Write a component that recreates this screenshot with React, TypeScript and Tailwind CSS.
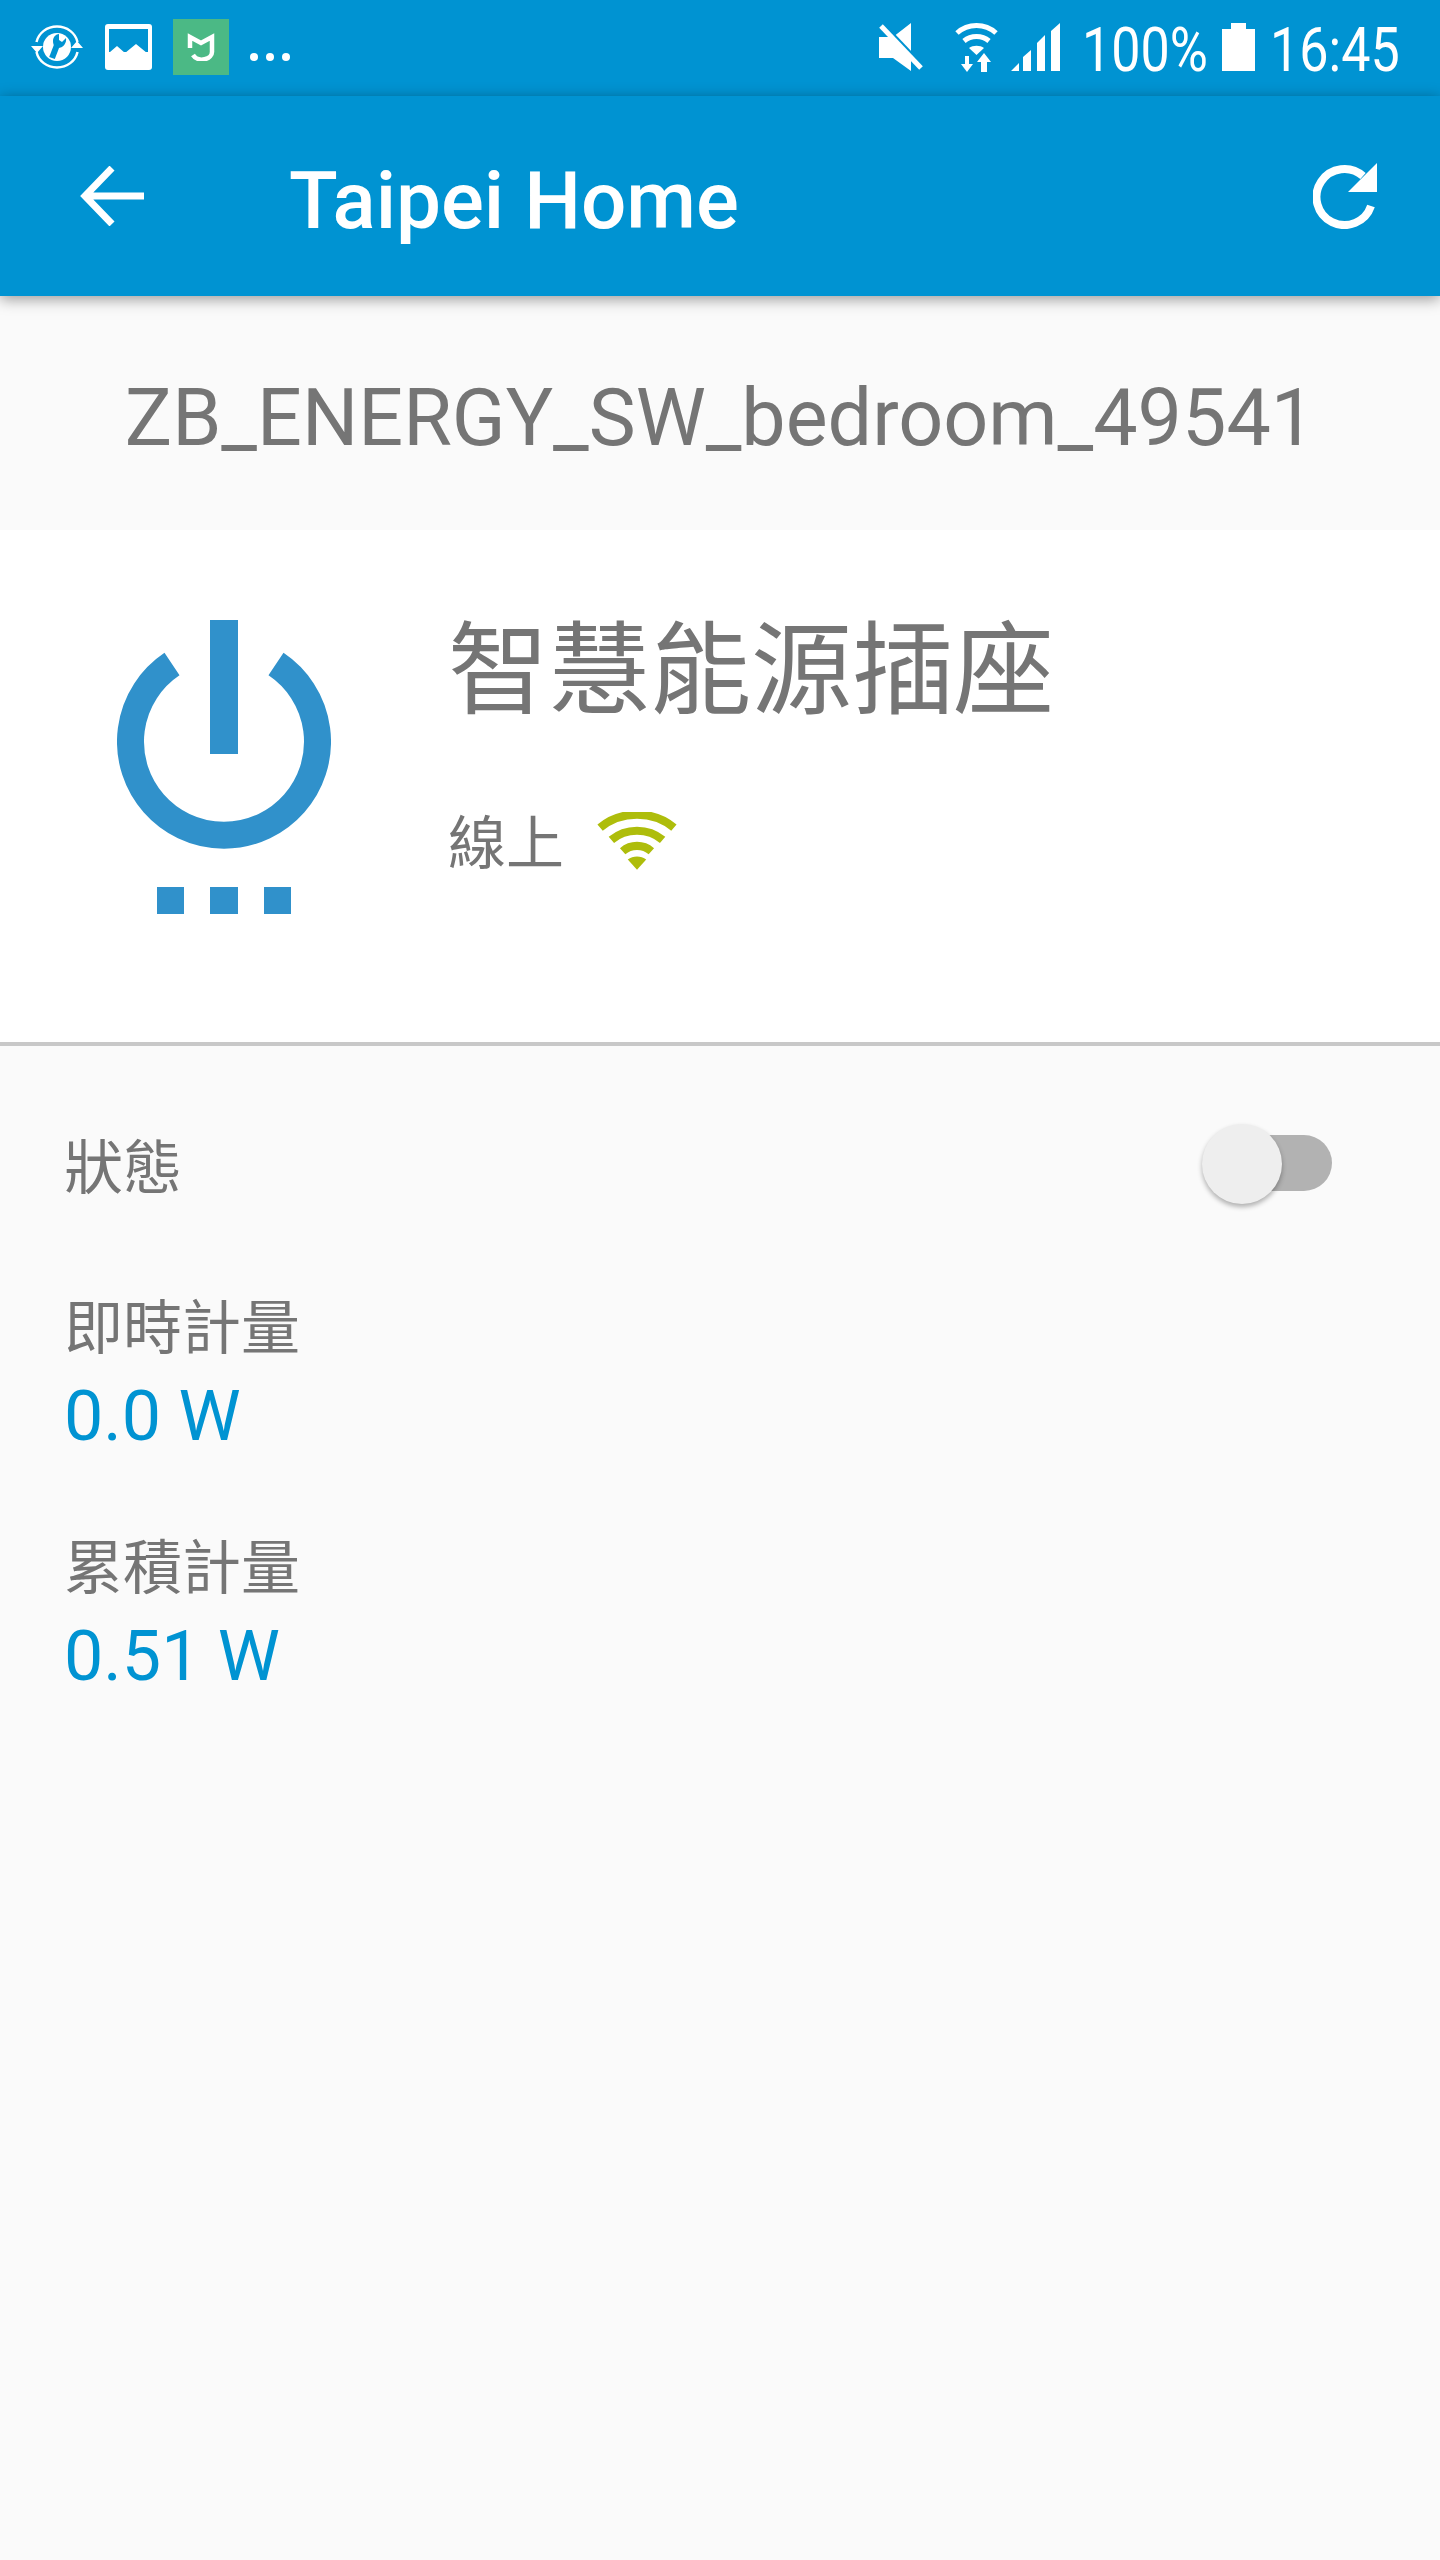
const FONT = "font-['Roboto','Noto_Sans_CJK_TC',sans-serif]";

/* Status bar icons, drawn by hand to follow the phone's own glyphs */
function SyncWrenchIcon() {
  return (
    <svg width="52" height="44" viewBox="0 0 52 44" fill="none" className="shrink-0">
      <path d="M5.500 17C7.500 8 16 1.500 26 1.500S44.500 8 46.500 17M46.500 27C44.500 36 36 42.500 26 42.500S7.500 36 5.500 27" stroke="#fff" strokeWidth="2.500" />
      <path d="M0 21h12L6 28zM40 23h12l-6-7z" fill="#fff" />
      <circle cx="26" cy="22" r="14" fill="#fff" />
      <path d="M21 33l5-13" stroke="#0093d2" strokeWidth="6" />
      <path d="M22 16c0-4 3-7 6-7v6l3 2 4-4c1 5-3 10-8 10-3 0-5-3-5-7z" fill="#0093d2" />
    </svg>
  );
}

function GalleryIcon() {
  return (
    <svg width="47" height="46" viewBox="0 0 47 46" className="shrink-0">
      <rect width="47" height="46" rx="3" fill="#fff" />
      <rect x="4" y="5" width="39" height="23" fill="#0093d2" />
      <path d="M5 28l7-6 8 7 11-9 11 9v6H5z" fill="#fff" />
    </svg>
  );
}

function MiHomeIcon() {
  return (
    <div className="flex h-[56px] w-[56px] shrink-0 items-center justify-center bg-[#4bb985]">
      <svg width="28" height="28" viewBox="0 0 28 28" fill="none">
        <path d="M3 15V4l11 6 11-6v14a10 8 0 0 1-19 4" stroke="#fff" strokeWidth="4.500" />
      </svg>
    </div>
  );
}

function MuteIcon() {
  return (
    <svg width="44" height="48" viewBox="0 0 44 48" className="shrink-0">
      <path d="M32 0v48L14 35H0V14h14z" fill="#fff" />
      <path d="M2 0l42 44" stroke="#0093d2" strokeWidth="5" />
      <path d="M2 3l40 42" stroke="#fff" strokeWidth="5" />
    </svg>
  );
}

function DataWifiIcon() {
  return (
    <svg width="43" height="49" viewBox="0 0 43 49" fill="none" className="shrink-0">
      <path d="M2 10c11-10 28-10 39 0" stroke="#fff" strokeWidth="5" />
      <path d="M9 18c7-6 18-6 25 0" stroke="#fff" strokeWidth="5" />
      <path d="M14 25l7.500 7 7.500-7c-4-3-11-3-15 0z" fill="#fff" />
      <path d="M10 33h4v8h4l-6 8-6-8h4zM29 30l7 9h-4v10h-6V39h-4z" fill="#fff" />
    </svg>
  );
}

function SignalIcon() {
  return (
    <svg width="49" height="48" viewBox="0 0 49 48" className="shrink-0">
      <path d="M0 48l8-8v8zM12 48V34l8-7v21zM26 48V20l8-8v36zM40 48V8l9-8v48z" fill="#fff" />
    </svg>
  );
}

function BatteryIcon() {
  return (
    <svg width="33" height="48" viewBox="0 0 33 48" className="shrink-0">
      <path d="M0 6h9V0h15v6h9v42H0z" fill="#fff" />
    </svg>
  );
}

function StatusBar() {
  return (
    <div className="flex h-[96px] items-center bg-[#0093d2] pb-[2px] pl-[31px] pr-[39px] text-white">
      <SyncWrenchIcon />
      <div className="ml-[22px]">
        <GalleryIcon />
      </div>
      <div className="ml-[21px]">
        <MiHomeIcon />
      </div>
      <div className="ml-[21px] mt-[20px] flex gap-[8px]">
        <span className="h-[8px] w-[8px] rounded-full bg-white" />
        <span className="h-[8px] w-[8px] rounded-full bg-white" />
        <span className="h-[8px] w-[8px] rounded-full bg-white" />
      </div>

      <div className="ml-auto flex items-center">
        <MuteIcon />
        <div className="ml-[32px]">
          <DataWifiIcon />
        </div>
        <div className="ml-[13px]">
          <SignalIcon />
        </div>
        <span className="ml-[22px] mt-[5px] w-[128px] origin-left scale-x-[0.84] text-[62px] leading-none whitespace-nowrap">100%</span>
        <div className="ml-[12px]">
          <BatteryIcon />
        </div>
        <span className="ml-[15px] mt-[5px] w-[131px] origin-left scale-x-[0.84] text-[62px] leading-none whitespace-nowrap">16:45</span>
      </div>
    </div>
  );
}

function AppBar() {
  return (
    <header className="relative z-10 flex h-[200px] items-center bg-[#0093d2] pl-[80px] pr-[63px] text-white shadow-[0_3px_14px_rgba(0,0,0,0.4)]">
      <svg width="64" height="60" viewBox="0 0 64 60" fill="none">
        <path d="M64 30H5M32 2L5 30l27 28" stroke="#fff" strokeWidth="7" />
      </svg>
      <h1 className="ml-[145px] pt-[10px] text-[80px] leading-none font-medium">Taipei Home</h1>
      <svg width="64" height="66" viewBox="0 0 64 66" fill="none" className="ml-auto">
        <path d="M58 43A28 28 0 1 1 50 13" stroke="#fff" strokeWidth="8" />
        <path d="M64 0v29H35z" fill="#fff" />
      </svg>
    </header>
  );
}

function PowerIcon() {
  return (
    <svg width="214" height="294" viewBox="0 0 214 294" fill="none" className="shrink-0">
      <path d="M55 44A93.500 93.500 0 1 0 159 44" stroke="#3091cb" strokeWidth="27" />
      <rect x="93" y="0" width="28" height="134" fill="#3091cb" />
      <rect x="40" y="267" width="27" height="27" fill="#3091cb" />
      <rect x="93" y="267" width="28" height="27" fill="#3091cb" />
      <rect x="147" y="267" width="27" height="27" fill="#3091cb" />
    </svg>
  );
}

function OnlineWifiIcon() {
  return (
    <svg width="82" height="58" viewBox="0 0 80 56" fill="none">
      <path d="M4 15c20-17 52-17 72 0" stroke="#aebd0b" strokeWidth="8" />
      <path d="M15 27c14-12 36-12 50 0" stroke="#aebd0b" strokeWidth="8" />
      <path d="M26 38c8-7 20-7 28 0" stroke="#aebd0b" strokeWidth="8" />
      <path d="M31 46c5-4 13-4 18 0l-9 10z" fill="#aebd0b" />
    </svg>
  );
}

function Toggle() {
  return (
    <div className="relative mt-[-9px] h-[80px] w-[130px]">
      <div className="absolute right-0 top-[11px] h-[56px] w-[110px] rounded-full bg-[#b2b2b2]" />
      <div className="absolute left-0 top-0 h-[80px] w-[80px] rounded-full bg-[#eeeeee] shadow-[0_3px_5px_rgba(0,0,0,0.3)]" />
    </div>
  );
}

function Reading({ label, value, gap }: { label: string; value: string; gap: string }) {
  return (
    <div className={gap}>
      <p className="text-[59px] leading-[68px] text-[#757575]">{label}</p>
      <p className="mt-[13px] text-[70px] leading-[80px] text-[#0093d2]">{value}</p>
    </div>
  );
}

export default function App() {
  return (
    <div className={`flex min-h-[2560px] flex-col bg-[#fafafa] ${FONT}`}>
      <StatusBar />
      <AppBar />

      <div className="flex h-[234px] items-center justify-center pt-[10px] text-[79px] leading-none text-[#757575]">
        ZB_ENERGY_SW_bedroom_49541
      </div>

      {/* Device card */}
      <section className="flex h-[516px] border-b-[4px] border-[#c8c8c8] bg-white pl-[117px] pt-[90px]">
        <PowerIcon />
        <div className="ml-[117px] flex flex-col">
          <h2 className="mt-[-8px] text-[101px] leading-[120px] text-[#757575]">智慧能源插座</h2>
          <div className="mt-[78px] flex items-center">
            <span className="text-[58px] leading-[68px] text-[#757575]">線上</span>
            <div className="ml-[32px] mt-[-7px]">
              <OnlineWifiIcon />
            </div>
          </div>
        </div>
      </section>

      <div className="px-[64px] pt-[87px]">
        <div className="flex items-center justify-between pb-[9px] pr-[44px]">
          <span className="text-[59px] leading-[68px] text-[#757575]">狀態</span>
          <Toggle />
        </div>
        <Reading label="即時計量" value="0.0 W" gap="mt-[82px]" />
        <Reading label="累積計量" value="0.51 W" gap="mt-[79px]" />
      </div>
    </div>
  );
}
